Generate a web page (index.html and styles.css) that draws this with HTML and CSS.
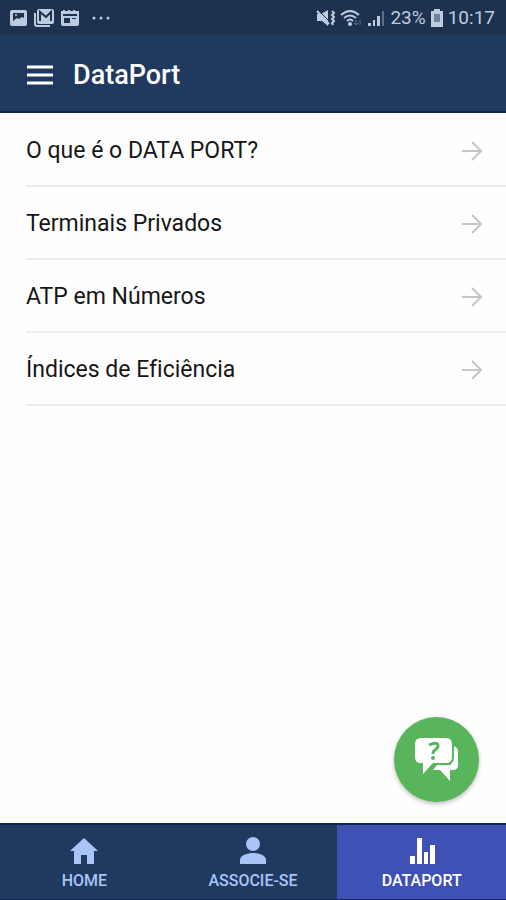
FILE: index.html
```html
<!DOCTYPE html>
<html lang="pt-BR">
<head>
<meta charset="utf-8">
<meta name="viewport" content="width=device-width, initial-scale=1">
<title>DataPort</title>
<link rel="stylesheet" href="styles.css">
</head>
<body>
<div class="status">
  <div class="status-group">
    <svg class="note" viewBox="0 0 18 18" aria-hidden="true"><rect x="0" y="1" width="17" height="16" rx="2" fill="currentColor"/><path d="M3 4h11v5l-2-1-3 2-2-1-4 3z" fill="#1d324e"/><circle cx="6" cy="6" r="1" fill="currentColor"/></svg>
    <svg class="mail" viewBox="0 0 21 18" aria-hidden="true"><path d="M1 4v11q0 2 2 2h13" fill="none" stroke="currentColor" stroke-width="2"/><rect x="3" y="0" width="17" height="15" rx="2" fill="currentColor"/><path d="M6 12V3l6 5 5-5v9" fill="none" stroke="#1d324e" stroke-width="2"/></svg>
    <svg class="note" viewBox="0 0 18 18" aria-hidden="true"><path d="M0 2h2V1h2v1h3V1h2v1h3V1h2v1h4v13q0 2-2 2H2q-2 0-2-2z" fill="currentColor"/><path d="M2 5h14v2H2zM3 9h6v5H3zM11 9h4v1h-4z" fill="#1d324e"/></svg>
    <svg class="dots" viewBox="0 0 20 18" aria-hidden="true"><g fill="currentColor"><circle cx="3" cy="9" r="1.500"/><circle cx="10" cy="9" r="1.500"/><circle cx="17" cy="9" r="1.500"/></g></svg>
  </div>
  <div class="status-group status-right">
    <svg class="mute" viewBox="0 0 20 18" aria-hidden="true"><path d="M2 5h4l7-4v16l-6-5H2z" fill="currentColor"/><path d="M3 1l11 11" stroke="#1d324e" stroke-width="1"/><path d="M2 2l12 13" stroke="currentColor" stroke-width="2"/><path d="M17 2l2 2-2 2 2 2-2 2 2 2-2 2 1 2" fill="none" stroke="currentColor" stroke-width="2"/></svg>
    <svg class="wifi" viewBox="0 0 22 18" aria-hidden="true"><g fill="none" stroke="currentColor" stroke-width="2"><path d="M1 6q9-8 18 0M4 9q6-5 12 0M7 12q3-3 6 0"/></g><circle cx="10" cy="15" r="2" fill="currentColor"/><path d="M16 11v5m-2-2l2 2 2-2M20 16v-5" fill="none" stroke="#5c7088"/></svg>
    <svg class="note" viewBox="0 0 18 18" aria-hidden="true"><path d="M1 14h3v3H1zM6 11h2v6H6zM10 7h3v10h-3z" fill="currentColor"/><path d="M15 2h2v15h-2z" fill="#5c7088"/></svg>
    <span>23%</span>
    <svg class="battery" viewBox="0 0 12 18" aria-hidden="true"><path d="M3 0h6v2h3v16H0V2h3z" fill="currentColor"/><path d="M3 5h6v8H3z" fill="#71839a"/></svg>
    <span>10:17</span>
  </div>
</div>
<header class="bar">
  <button class="menu" type="button" aria-label="Menu"><svg viewBox="0 0 26 20" aria-hidden="true"><path d="M0 2h26M0 10h26M0 18h26" stroke="currentColor" stroke-width="3"/></svg></button>
  <h1>DataPort</h1>
</header>
<main>
  <nav class="list" aria-label="DataPort">
    <a href="#sobre">O que é o DATA PORT?<svg viewBox="0 0 20 20" aria-hidden="true"><path d="M0 10h18M10 1l9 9-9 9"/></svg></a>
    <a href="#terminais">Terminais Privados<svg viewBox="0 0 20 20" aria-hidden="true"><path d="M0 10h18M10 1l9 9-9 9"/></svg></a>
    <a href="#numeros">ATP em Números<svg viewBox="0 0 20 20" aria-hidden="true"><path d="M0 10h18M10 1l9 9-9 9"/></svg></a>
    <a href="#indices">Índices de Eficiência<svg viewBox="0 0 20 20" aria-hidden="true"><path d="M0 10h18M10 1l9 9-9 9"/></svg></a>
  </nav>
</main>
<button class="fab" type="button" aria-label="Ajuda"><svg viewBox="0 0 44 44" aria-hidden="true"><path d="M36 8h2q5 1 5 6v13q0 5-5 5h-3v11L25 32h-7l4-5h14z" fill="#fff"/><path d="M6 0h25q6 0 6 6v13q0 6-6 6H18L8 36V25H6q-6 0-6-6V6q0-6 6-6z" fill="#fff" stroke="#58b55b" stroke-width="4" paint-order="stroke"/><path d="M14 7q9-4 9 1 0 2-3 4-2 1-2 4" fill="none" stroke="#58b55b" stroke-width="3"/><circle cx="18" cy="20" r="2" fill="#58b55b"/></svg></button>
<nav class="tabs" aria-label="Principal">
  <a href="#home"><svg viewBox="0 0 28 28" aria-hidden="true"><path d="M14 1l14 13h-4v13h-7v-9h-6v9H4V14H0z" fill="currentColor"/></svg>HOME</a>
  <a href="#associe-se"><svg viewBox="0 0 28 28" aria-hidden="true"><circle cx="14" cy="7" r="7" fill="currentColor"/><path d="M1 27v-4c0-5 8-7 13-7s13 2 13 7v4z" fill="currentColor"/></svg>ASSOCIE-SE</a>
  <a href="#dataport" class="active" aria-current="page"><svg viewBox="0 0 28 28" aria-hidden="true"><path d="M2 19h5v8H2zM9 1h5v26H9zM16 15h4v12h-4zM22 8h5v19h-5z" fill="currentColor"/></svg>DATAPORT</a>
</nav>
</body>
</html>
```
FILE: styles.css
```css
* {
  box-sizing: border-box;
}

body {
  margin: 0;
  min-height: 100vh;
  display: flex;
  flex-direction: column;
  background: #fefefe;
  color: #161616;
  font-family: Roboto, sans-serif;
  font-variant-ligatures: none;
}

a {
  color: inherit;
  text-decoration: none;
}

button {
  padding: 0;
  border: 0;
  background: none;
  color: inherit;
}

svg {
  display: block;
  flex: none;
}

.status {
  display: flex;
  justify-content: space-between;
  align-items: center;
  height: 35px;
  padding: 0 11px 0 10px;
  background: #1d324e;
  color: #bdcbe0;
  font-size: 19px;
}

.status-group {
  display: flex;
  align-items: center;
  gap: 6px;
}

.status-right {
  gap: 5px;
}

.note {
  width: 18px;
  height: 18px;
}

.mail {
  width: 21px;
  height: 18px;
}

.dots {
  width: 20px;
  height: 18px;
  margin-left: 6px;
}

.mute {
  width: 20px;
  height: 18px;
}

.wifi {
  width: 22px;
  height: 18px;
}

.battery {
  width: 12px;
  height: 18px;
}

.bar {
  display: flex;
  align-items: center;
  gap: 20px;
  height: 78px;
  padding: 4px 27px 0;
  background: #20395f;
  border-bottom: 2px solid #142350;
  color: #fff;
}

.menu svg {
  width: 26px;
  height: 20px;
}

h1 {
  margin: 0;
  font-size: 27px;
  line-height: 32px;
  font-weight: 500;
}

main {
  flex: 1;
}

.list {
  padding: 1px 0 0 26px;
}

.list a {
  display: flex;
  justify-content: space-between;
  align-items: center;
  height: 73px;
  padding: 2px 24px 0 0;
  border-bottom: 2px solid #ececec;
  font-size: 23px;
}

.list svg {
  width: 20px;
  height: 20px;
  fill: none;
  stroke: #c6c6c6;
  stroke-width: 2;
}

.fab {
  position: fixed;
  right: 27px;
  bottom: 98px;
  display: flex;
  justify-content: center;
  align-items: center;
  width: 85px;
  height: 85px;
  border-radius: 50%;
  background: #58b55b;
  box-shadow: 0 2px 4px #0004;
}

.fab svg {
  width: 44px;
  height: 44px;
}

.tabs {
  display: grid;
  grid-template-columns: repeat(3, 1fr);
  border-top: 2px solid #142350;
  border-bottom: 1px solid #142350;
  background: #20395f;
  color: #abc4f8;
}

.tabs a {
  display: flex;
  flex-direction: column;
  align-items: center;
  gap: 6px;
  padding: 12px 0 8px;
  font-size: 16px;
  line-height: 20px;
  font-weight: 500;
}

.tabs svg {
  width: 28px;
  height: 28px;
}

.tabs .active {
  background: #3f51b5;
  color: #fff;
}
```
